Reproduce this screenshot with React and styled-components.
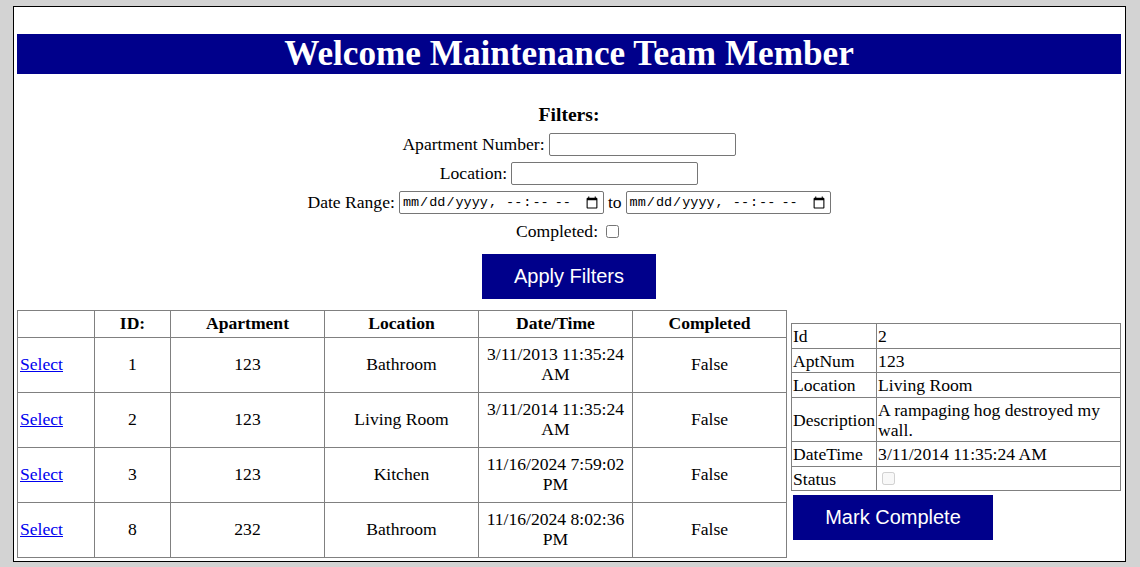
import { useState } from 'react';
import styled, { createGlobalStyle } from 'styled-components';

const GlobalStyle = createGlobalStyle`
  body {
    margin: 0; background-color: #d3d3d3;
    font-family: "Liberation Serif", "Times New Roman", serif; font-size: 17.6px;
  }
`;

const Page = styled.div`
  width: 1104px; margin: 6px 0 0 13px; padding: 0 4px 3px 3px;
  background-color: white; border: 1px solid black;
`;

const Title = styled.h1`
  margin: 27px 0 0; height: 40px; line-height: 40px;
  background-color: #00008b; color: white; text-align: center;
  font-size: 35.2px; font-weight: bold;
`;

const Filters = styled.div`
  display: flex; flex-direction: column; align-items: center;
`;

const FiltersTitle = styled.div`
  margin: 30px 0 4px; font-size: 19.6px; font-weight: bold; line-height: 22px;
`;

const FilterRow = styled.div`
  display: flex; align-items: center; gap: 4px; height: 29px; line-height: 19px;
`;

const TextInput = styled.input`
  box-sizing: border-box; width: 187px; height: 23px; padding: 1px 2px;
  border: 1px solid #767676; border-radius: 2px; font-size: 14.67px;
`;

const DateInput = styled.input`
  box-sizing: border-box; width: 205px; height: 23px; padding: 1px 2px;
  border: 1px solid #767676; border-radius: 2px;
  font-family: "Liberation Mono", monospace; font-size: 13.5px;
`;

const Check = styled.input`
  margin: 3px 3px 3px 4px; width: 13px; height: 13px;
`;

const Button = styled.button`
  box-sizing: border-box; width: ${p => p.$w}px; height: 45px; padding: 0;
  background-color: #00008b; color: white; border: none;
  font-family: "Liberation Sans", Arial, sans-serif; font-size: 20px; cursor: pointer;
`;

const ApplyButton = styled(Button)`
  margin-top: 8px;
`;

const Content = styled.div`
  display: flex; align-items: flex-start; gap: 4px; margin-top: 11px;
`;

const RequestTable = styled.table`
  width: 770px; border-collapse: collapse; table-layout: fixed;

  th, td { border: 1px solid #808080; text-align: center; line-height: 20px; }
  th { padding: 2px 2px 4px; font-weight: bold; }
  td { padding: 6px 2px 8px; }
  td:first-child { text-align: left; }
  a { color: #0000ee; text-decoration: underline; cursor: pointer; }
`;

const Side = styled.div`
  display: flex; flex-direction: column; align-items: flex-start;
  width: 330px; margin-top: 13px;
`;

const DetailTable = styled.table`
  width: 100%; border-collapse: collapse;

  td { border: 1px solid #808080; padding: 2px 1px 1.5px; line-height: 20px; text-align: left; }
  td:first-child { width: 1%; }
`;

const CompleteButton = styled(Button)`
  margin: 4px 0 0 2px;
`;

const requests = [
  { id: 1, apt: 123, location: 'Bathroom', date: '3/11/2013 11:35:24 AM', completed: 'False', description: '' },
  { id: 2, apt: 123, location: 'Living Room', date: '3/11/2014 11:35:24 AM', completed: 'False', description: 'A rampaging hog destroyed my wall.' },
  { id: 3, apt: 123, location: 'Kitchen', date: '11/16/2024 7:59:02 PM', completed: 'False', description: '' },
  { id: 8, apt: 232, location: 'Bathroom', date: '11/16/2024 8:02:36 PM', completed: 'False', description: '' },
];

export default function App() {
  const [selected, setSelected] = useState(requests[1]);

  return (
    <>
      <GlobalStyle />
      <Page>
        <Title>Welcome Maintenance Team Member</Title>

        <Filters>
          <FiltersTitle>Filters:</FiltersTitle>
          <FilterRow>
            <span>Apartment Number:</span>
            <TextInput type="text" />
          </FilterRow>
          <FilterRow>
            <span>Location:</span>
            <TextInput type="text" />
          </FilterRow>
          <FilterRow>
            <span>Date Range:</span>
            <DateInput type="datetime-local" />
            <span>to</span>
            <DateInput type="datetime-local" />
          </FilterRow>
          <FilterRow>
            <span>Completed:</span>
            <Check type="checkbox" />
          </FilterRow>
          <ApplyButton $w={174}>Apply Filters</ApplyButton>
        </Filters>

        <Content>
          <RequestTable>
            <thead>
              <tr>
                <th style={{ width: 72 }}></th>
                <th style={{ width: 71 }}>ID:</th>
                <th>Apartment</th>
                <th>Location</th>
                <th>Date/Time</th>
                <th>Completed</th>
              </tr>
            </thead>
            <tbody>
              {requests.map(r => (
                <tr key={r.id}>
                  <td><a onClick={() => setSelected(r)}>Select</a></td>
                  <td>{r.id}</td>
                  <td>{r.apt}</td>
                  <td>{r.location}</td>
                  <td>{r.date}</td>
                  <td>{r.completed}</td>
                </tr>
              ))}
            </tbody>
          </RequestTable>

          <Side>
            <DetailTable>
              <tbody>
                <tr><td>Id</td><td>{selected.id}</td></tr>
                <tr><td>AptNum</td><td>{selected.apt}</td></tr>
                <tr><td>Location</td><td>{selected.location}</td></tr>
                <tr><td>Description</td><td>{selected.description}</td></tr>
                <tr><td>DateTime</td><td>{selected.date}</td></tr>
                <tr><td>Status</td><td><Check type="checkbox" disabled /></td></tr>
              </tbody>
            </DetailTable>
            <CompleteButton $w={200}>Mark Complete</CompleteButton>
          </Side>
        </Content>
      </Page>
    </>
  );
}
